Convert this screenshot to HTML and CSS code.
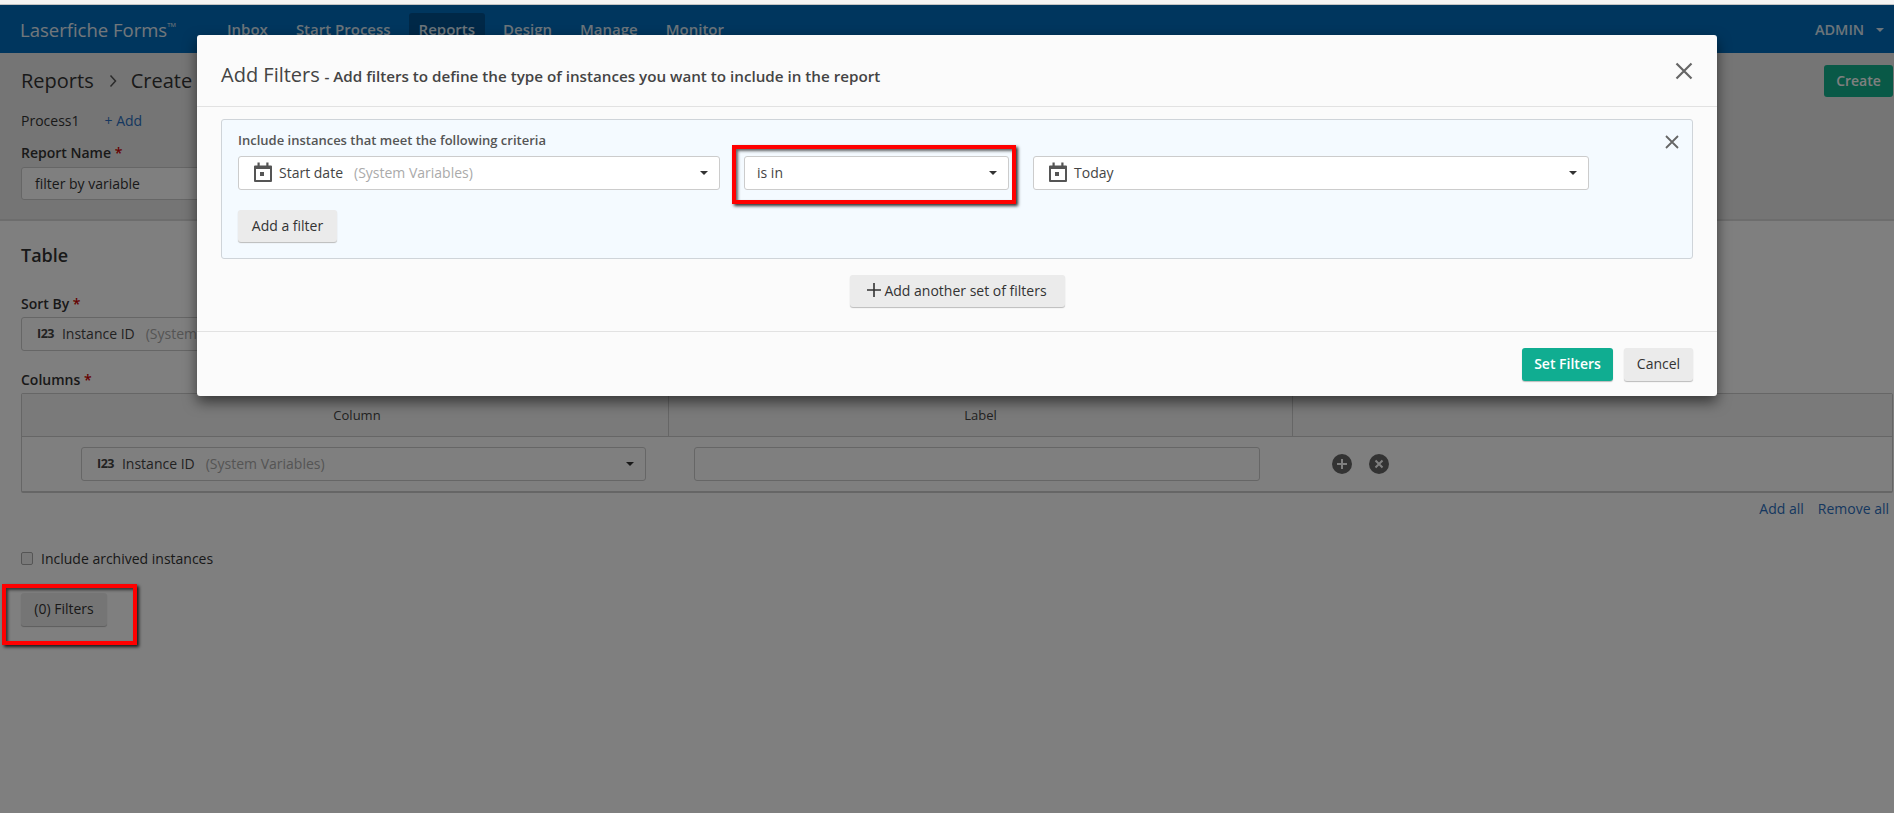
FILE: index.html
```html
<!DOCTYPE html>
<html lang="en">
<head>
<meta charset="utf-8">
<title>Add Filters</title>
<link rel="stylesheet" href="styles.css">
</head>
<body>
<svg class="defs" width="0" height="0" aria-hidden="true">
  <symbol id="cal" viewBox="0 0 18 20">
    <path d="M1 3.5h16a1 1 0 0 1 1 1V19a1 1 0 0 1-1 1H1a1 1 0 0 1-1-1V4.500a1 1 0 0 1 1-1zM2 7v11h14V7z" fill="#555" fill-rule="evenodd"/>
    <rect x="3.500" y="0.500" width="2.200" height="4" fill="#555"/>
    <rect x="12.300" y="0.500" width="2.200" height="4" fill="#555"/>
    <rect x="6" y="10" width="4" height="4" fill="#555"/>
  </symbol>
</svg>
<div class="strip"></div>
<div class="page">
  <header class="topbar">
    <div class="brand">Laserfiche Forms<sup>TM</sup></div>
    <nav class="nav">
      <a class="nav-item">Inbox</a>
      <a class="nav-item">Start Process</a>
      <a class="nav-item active">Reports</a>
      <a class="nav-item">Design</a>
      <a class="nav-item">Manage</a>
      <a class="nav-item">Monitor</a>
    </nav>
    <div class="user">ADMIN <span class="user-caret"></span></div>
  </header>

  <section class="top-form">
    <div class="crumb-row">
      <div class="crumbs"><span>Reports</span><svg class="crumb-sep" viewBox="0 0 8 14"><path d="M1.500 1.500L6.500 7l-5 5.500" fill="none" stroke="#555" stroke-width="1.500"/></svg><span>Create</span></div>
      <button class="btn-create">Create</button>
    </div>
    <div class="process-row"><span>Process1</span><a class="link">+ Add</a></div>
    <label class="field-label">Report Name <span class="req">*</span></label>
    <div class="text-input name-input">filter by variable</div>
  </section>

  <section class="table-form">
    <h2 class="section-title">Table</h2>
    <label class="field-label">Sort By <span class="req">*</span></label>
    <div class="select sort-select"><span class="num-icon">I23</span>Instance ID<span class="muted">(System Variables)</span></div>
    <label class="field-label columns-label">Columns <span class="req">*</span></label>
    <div class="grid-table">
      <div class="grid-head"><div class="cell-col">Column</div><div class="cell-label">Label</div><div></div></div>
      <div class="grid-row">
        <div class="cell-col-body"><div class="select col-select"><span class="num-icon">I23</span>Instance ID<span class="muted">(System Variables)</span><span class="caret"></span></div></div>
        <div class="cell-label-body"><div class="text-input label-input"></div></div>
        <div class="cell-actions">
          <svg class="round-icon" viewBox="0 0 20 20"><circle cx="10" cy="10" r="10" fill="#666"/><path d="M10 5v10M5 10h10" stroke="#fff" stroke-width="2"/></svg>
          <svg class="round-icon" viewBox="0 0 20 20"><circle cx="10" cy="10" r="10" fill="#666"/><path d="M6.500 6.500l7 7M13.500 6.500l-7 7" stroke="#fff" stroke-width="2"/></svg>
        </div>
      </div>
    </div>
    <div class="add-links"><a class="link">Add all</a><a class="link">Remove all</a></div>
    <label class="check-row"><span class="checkbox"></span>Include archived instances</label>
    <button class="btn filters-btn">(0) Filters</button>
  </section>

  <div class="overlay"></div>

  <div class="modal">
    <div class="modal-head">
      <div class="modal-title"><span class="title-main">Add Filters</span> <span class="title-sub">- Add filters to define the type of instances you want to include in the report</span></div>
      <svg class="x-large" viewBox="0 0 18 18"><path d="M1.500 1.500l15 15M16.500 1.500l-15 15" stroke="#666" stroke-width="2.200"/></svg>
    </div>
    <div class="modal-body">
      <div class="filter-panel">
        <div class="panel-label">Include instances that meet the following criteria</div>
        <svg class="x-small" viewBox="0 0 14 14"><path d="M1 1l12 12M13 1L1 13" stroke="#666" stroke-width="1.800"/></svg>
        <div class="filter-row">
          <div class="select f-var"><svg class="cal"><use href="#cal"/></svg>Start date<span class="muted">(System Variables)</span><span class="caret"></span></div>
          <div class="select f-op">is in<span class="caret"></span></div>
          <div class="select f-val"><svg class="cal"><use href="#cal"/></svg>Today<span class="caret"></span></div>
        </div>
        <button class="btn add-filter">Add a filter</button>
      </div>
      <div class="another-row">
        <button class="btn another"><svg class="plus" viewBox="0 0 14 14"><path d="M7 0v14M0 7h14" stroke="#333" stroke-width="1.600"/></svg>Add another set of filters</button>
      </div>
    </div>
    <div class="modal-foot">
      <button class="btn btn-primary">Set Filters</button>
      <button class="btn cancel">Cancel</button>
    </div>
  </div>

  <div class="mark mark-op"></div>
  <div class="mark mark-filters"></div>
</div>
</body>
</html>
```
FILE: styles.css
```css
* { box-sizing: border-box; }
html, body { margin: 0; padding: 0; height: 100%; overflow: hidden; }
body { background: #fff; font-family: "Open Sans", "Liberation Sans", sans-serif; font-size: 14px; color: #333; }
.defs { position: absolute; }
.strip { height: 5px; background: #f4f4f4; border-bottom: 1px solid #c4c4c4; }
.page { position: relative; height: 808px; background: #fff; }

.topbar { height: 48px; background: #006cbc; display: flex; color: #fff; position: relative; }
.brand { font-size: 18.5px; padding: 13px 0 0 20px; width: 217px; color: #e4eef6; line-height: 24px; }
.brand sup { font-size: 6px; vertical-align: 10px; line-height: 0; }
.nav { display: flex; padding-top: 8px; }
.nav-item { font-size: 15px; font-weight: 600; line-height: 24px; padding: 4px 10px; height: 40px; margin-right: 8px; color: #d9e8f4; }
.nav-item.active { background: #00508f; border-radius: 3px 3px 0 0; }
.user { margin-left: auto; padding: 13px 10px 0 0; font-size: 14.500px; font-weight: 600; color: #d9e8f4; line-height: 24px; }
.user-caret { display: inline-block; width: 0; height: 0; border: 4px solid transparent; border-top-color: #d9e8f4; border-bottom: 0; margin-left: 8px; vertical-align: 3px; }

.top-form { height: 168px; background: #ebebeb; border-bottom: 2px solid #dadada; padding: 12px 1px 0 21px; }
.crumb-row { display: flex; justify-content: space-between; height: 32px; }
.crumbs { display: flex; align-items: center; font-size: 20px; line-height: 32px; color: #333; }
.crumb-sep { width: 8px; height: 14px; margin: 0 14px 0 15px; }
.btn-create { width: 69px; height: 32px; padding: 0 0 2px; border: 0; border-radius: 3px; background: #12b28e; color: #fff; font: 600 14px "Open Sans", sans-serif; }
.process-row { display: flex; gap: 25px; margin-top: 15px; line-height: 18px; }
.link { color: #2c6fbf; }
.field-label { display: block; font-weight: 600; line-height: 18px; }
.req { color: #c00; }
.top-form .field-label { margin-top: 14px; }
.text-input { height: 33px; background: #fff; border: 1px solid #ccc; border-radius: 3px; line-height: 31px; padding: 0 13px; }
.name-input { margin-top: 5px; width: 400px; }

.table-form { padding: 0 3px 0 21px; }
.section-title { font-size: 18px; font-weight: 600; line-height: 24px; margin: 22px 0 0; }
.table-form .section-title + .field-label { margin-top: 28px; }
.select { position: relative; display: flex; align-items: center; height: 34px; padding-bottom: 2px; background: #fff; border: 1px solid #ccc; border-radius: 3px; color: #444; white-space: nowrap; }
.muted { color: #aaa; margin-left: 11px; }
.caret { position: absolute; right: 11px; top: 14px; width: 0; height: 0; border: 4px solid transparent; border-top-color: #333; border-bottom: 0; }
.num-icon { font-weight: 700; font-size: 12.500px; letter-spacing: -0.5px; color: #444; margin: 0 8px 0 15px; }
.sort-select { margin-top: 4px; width: 480px; }
.columns-label { margin-top: 20px; }
.grid-table { width: 1872px; height: 100px; margin-top: 4px; border: 1px solid #ccc; border-bottom-width: 2px; border-radius: 2px; }
.grid-head { display: grid; grid-template-columns: 647px 624px 1fr; height: 43px; border-bottom: 1px solid #ccc; background: #f5f5f5; }
.cell-col, .cell-label { text-align: center; line-height: 42px; font-size: 13px; color: #444; border-right: 1px solid #ccc; }
.cell-col { padding-left: 24px; }
.grid-row { display: grid; grid-template-columns: 647px 624px 1fr; }
.cell-col-body { padding: 10px 23px 0 59px; }
.cell-label-body { padding: 10px 34px 0 25px; }
.label-input { height: 34px; width: 566px; }
.cell-actions { display: flex; gap: 17px; padding: 17px 0 0 39px; }
.round-icon { width: 20px; height: 20px; }
.add-links { width: 1872px; display: flex; justify-content: flex-end; gap: 14px; padding: 7px 4px 0 0; line-height: 18px; }
.check-row { display: flex; align-items: center; gap: 8px; margin-top: 31px; height: 18px; }
.checkbox { width: 12px; height: 13px; border: 1px solid #aaa; border-radius: 2px; background: #f2f2f2; }
.btn { display: block; border: 0; padding: 0 0 2px; border-radius: 3px; background: #ebebeb; color: #333; font: 400 14px "Open Sans", sans-serif; box-shadow: 0 1px 1px #bbb; white-space: nowrap; }
.filters-btn { width: 86px; height: 33px; margin-top: 26px; }

.overlay { position: absolute; left: 0; top: 0; right: 0; bottom: 0; background: rgba(0,0,0,.5); }

.modal { position: absolute; left: 197px; top: 30px; width: 1520px; height: 361px; background: #fbfbfb; border-radius: 3px; box-shadow: 0 6px 14px rgba(0,0,0,.55); display: flex; flex-direction: column; }
.modal-head { height: 72px; flex: none; border-bottom: 1px solid #e2e2e2; display: flex; padding: 0 24px; position: relative; }
.modal-title { padding-top: 28px; line-height: 24px; color: #444; }
.title-main { font-size: 20px; margin-right: 1px; }
.title-sub { font-size: 15.200px; font-weight: 600; }
.x-large { position: absolute; right: 24px; top: 27px; width: 18px; height: 18px; }
.modal-body { height: 224px; flex: none; padding: 12px 24px 0; }
.filter-panel { position: relative; height: 140px; background: #f4faff; border: 1px solid #cfd4d9; border-radius: 3px; padding: 11px 16px 0; }
.panel-label { font-size: 13px; font-weight: 600; line-height: 18px; color: #555; }
.x-small { position: absolute; right: 13px; top: 15px; width: 14px; height: 14px; }
.filter-row { display: flex; gap: 24px; margin-top: 7px; }
.f-var { width: 482px; }
.f-op { width: 265px; padding-left: 12px; }
.f-val { width: 556px; }
.cal { width: 18px; height: 20px; margin: 0 7px 0 15px; }
.add-filter { width: 99px; height: 32px; margin-top: 20px; }
.another-row { display: flex; justify-content: center; margin-top: 16px; }
.another { display: flex; align-items: center; gap: 3px; justify-content: center; width: 215px; height: 32px; }
.plus { width: 14px; height: 14px; }
.modal-foot { flex: 1; border-top: 1px solid #e2e2e2; display: flex; justify-content: flex-end; gap: 11px; padding: 16px 24px 0; }
.btn-primary { width: 91px; height: 33px; background: #10ad91; color: #fff; font-weight: 600; }
.cancel { width: 69px; height: 33px; }

.mark { position: absolute; border: 4px solid #f00; box-shadow: 2px 2px 3px rgba(0,0,0,.8), inset 2px 2px 3px rgba(0,0,0,.6); }
.mark-op { left: 732px; top: 140px; width: 284px; height: 59px; }
.mark-filters { left: 2px; top: 579px; width: 135px; height: 61px; }
```
